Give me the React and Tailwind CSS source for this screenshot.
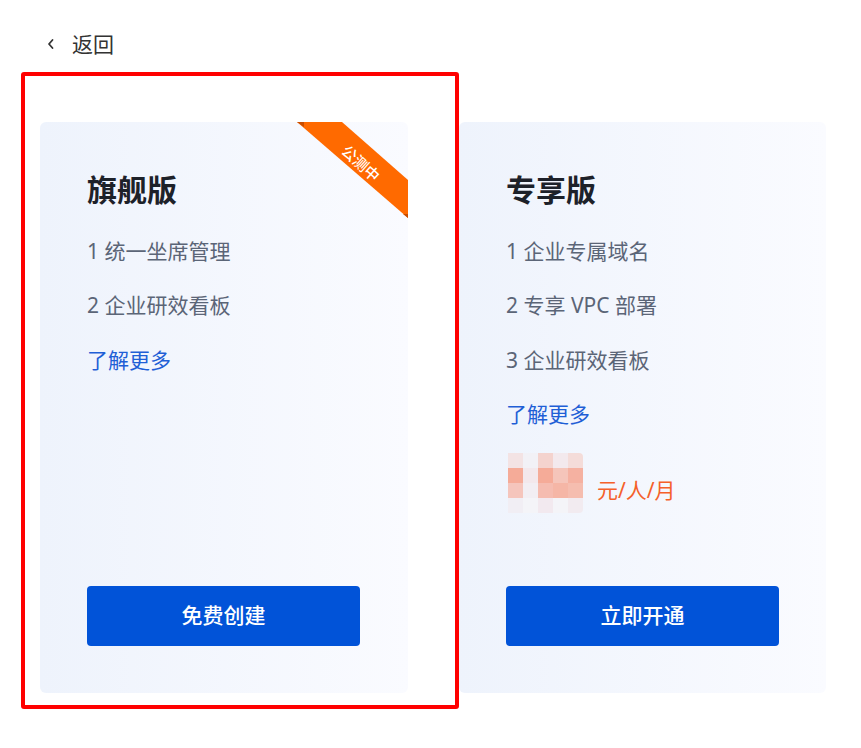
import React from "react";

const mosaic = [
  ["bg-[#f3e3e4]", "bg-[#f2f1f6]", "bg-[#f4d3ce]", "bg-[#f3e9ed]", "bg-[#f4dcd9]"],
  ["bg-[#f5ab98]", "bg-[#f3e8ec]", "bg-[#f5ab98]", "bg-[#f5c5ba]", "bg-[#f5b1a1]"],
  ["bg-[#f5c5bc]", "bg-[#f2eef3]", "bg-[#f5bcb0]", "bg-[#f5b6a6]", "bg-[#f5bdaf]"],
  ["bg-[#f1eef4]", "bg-[#f4f4f8]", "bg-[#f2e9ef]", "bg-[#f4f4f8]", "bg-[#f2ebf0]"],
];

function Card({ title, items, button, price, ribbon, width }) {
  return (
    <div
      className={`relative flex flex-col ${width} h-[571px] rounded-[6px] bg-gradient-to-r from-[#eef3fc] to-[#fafbff] pl-[47px] pt-[53px] pb-[47px] overflow-hidden`}
    >
      {ribbon && (
        <div className="absolute top-0 right-0 w-[111px] h-[96px]">
          <svg width="111" height="96" viewBox="0 0 111 96" className="absolute inset-0">
            <polygon points="0,0 45,0 111,58 111,96" fill="#ff6a00" />
            <polygon points="0,0 7,0 7,5" fill="#c84d00" />
            <polygon points="106,92 111,92 111,96" fill="#c84d00" />
          </svg>
          <div className="absolute left-[38px] top-[31px] w-[52px] h-[20px] rotate-[42deg] flex items-center justify-center text-white text-[15px] leading-[20px] font-medium">
            公测中
          </div>
        </div>
      )}
      <div className="text-[30px] leading-[30px] font-bold text-[#1d2129]">{title}</div>
      <div className="mt-[19px] flex flex-col">
        {items.map((t) => (
          <div key={t} className="text-[21px] leading-[54.4px] text-[#5b6577]">
            {t}
          </div>
        ))}
        <div className="text-[21px] leading-[54.4px] text-[#1f5fd6]">了解更多</div>
      </div>
      {price && (
        <div className="mt-[11px] flex items-end">
          <div className="ml-[2px] grid grid-cols-5 rounded-r-[4px] overflow-hidden">
            {mosaic.flat().map((c, i) => (
              <div key={i} className={`w-[15px] h-[15px] ${c}`} />
            ))}
          </div>
          <div className="ml-[14px] mb-[11px] text-[21px] leading-[24px] text-[#f5602a]">元/人/月</div>
        </div>
      )}
      <button className="mt-auto w-[273px] h-[60px] rounded-[4px] bg-[#0153d8] text-white text-[21px] font-medium">
        {button}
      </button>
    </div>
  );
}

export default function App() {
  return (
    <div
      className="relative w-[861px] h-[748px] bg-white"
      style={{ fontFamily: '"Noto Sans", "Noto Sans CJK SC", sans-serif' }}
    >
      <div className="h-[88px] flex items-center pl-[46px]">
        <div className="flex items-center gap-[16px]">
          <svg width="10" height="12" viewBox="0 0 10 12">
            <path d="M6.5 2 L3 6 L6.5 10" fill="none" stroke="#333" strokeWidth="1.8" strokeLinecap="round" strokeLinejoin="round" />
          </svg>
          <span className="text-[21px] leading-[24px] text-[#333]">返回</span>
        </div>
      </div>
      <div className="mt-[34px] flex gap-[51px] pl-[40px]">
        <Card
          width="w-[368px]"
          title="旗舰版"
          items={["1 统一坐席管理", "2 企业研效看板"]}
          button="免费创建"
          ribbon
        />
        <Card
          width="w-[367px]"
          title="专享版"
          items={["1 企业专属域名", "2 专享 VPC 部署", "3 企业研效看板"]}
          button="立即开通"
          price
        />
      </div>
      <div className="absolute left-[21px] top-[72px] w-[438px] h-[637px] border-[4px] border-[#ff0000] rounded-[3px] pointer-events-none" />
    </div>
  );
}
